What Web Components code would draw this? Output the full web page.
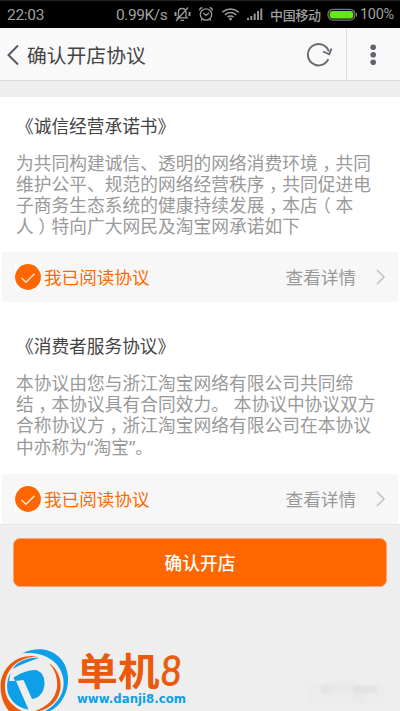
<!DOCTYPE html>
<html lang="zh-CN">
<head>
<meta charset="utf-8">
<title>确认开店协议</title>
<style>
html,body{margin:0;padding:0;background:#eee}
body{width:400px;height:711px;overflow:hidden;font-family:"Noto Sans","Noto Sans CJK SC",sans-serif}
</style>
</head>
<body>
<shop-page></shop-page>
<script>
function define(name, html){
  const t=document.createElement('template');
  t.innerHTML=html;
  customElements.define(name, class extends HTMLElement{
    constructor(){super();this.attachShadow({mode:'open'}).append(t.content.cloneNode(true));}
  });
}

define('status-bar', `<style>
:host{display:flex;height:28px;box-sizing:border-box;align-items:center;background:#000;border-top:1px solid #222;color:#a0a0a0;font:15.5px/28px Roboto,"Noto Sans CJK SC",sans-serif;white-space:nowrap}
span{display:block}svg{display:block;flex:none}
.t{width:109px;padding-left:7px;letter-spacing:-.3px}
.s{width:57px;letter-spacing:-.45px}
.c{width:57px;font:500 13px/28px "Noto Sans CJK SC",sans-serif;letter-spacing:-.3px}
.p{font-size:14.5px;letter-spacing:-.3px}
</style>
<span class="t">22:03</span><span class="s">0.99K/s</span>
<svg width="97" height="27" viewBox="173 1 97 27" fill="none" stroke="#999" stroke-width="1.3">
<path d="M178.500 17.500V12Q178.500 8.500 182 8.500T186 12V17.500M176.500 17.800H188M176 21L188 7.500M180.500 20.300H184"/><path d="M175.500 12V16M189.500 12V16" stroke-width="2"/>
<circle cx="206" cy="14.500" r="5.700"/><path d="M203.400 13L206 15.500L209 13M199.600 10.500Q199.600 8 202.400 7.700M209.600 7.700Q212.400 8 212.400 10.500M202.200 19L201 20.500M209.800 19L211 20.500"/>
<path d="M222.300 12.200Q230.500 5.800 238.700 12.200M224.800 14.800Q230.500 10.300 236.200 14.800M227.400 17.200Q230.500 14.900 233.600 17.200" stroke-width="1.600"/><circle cx="230.500" cy="19" r="1.400" fill="#999" stroke="none"/>
<path d="M248 20V17.700M251.300 20V16M254.700 20V13.500M258 20V11M261.300 20V8.500" stroke="#929292" stroke-width="2"/>
</svg>
<span class="c">中国移动</span>
<svg width="33" height="27" viewBox="327 1 33 27"><rect x="328" y="9.300" width="27" height="10.800" rx="5" fill="#111" stroke="#777" stroke-width="1.300"/><rect x="329.700" y="11" width="23.600" height="7.400" rx="3" fill="#66e619"/><path d="M356.500 13V16.500" stroke="#777"/></svg>
<span class="p">100%</span>`);

define('title-bar', `<style>
:host{display:flex;height:53px;box-sizing:border-box;background:#f9f9f9;border-bottom:1px solid #dcdcdc;align-items:stretch}
svg{display:block;flex:none}
h1{margin:0;flex:1;font:400 19.800px/54px "Noto Sans CJK SC",sans-serif;color:#444}
.m{width:53px;border-left:1px solid #ddd}
</style>
<svg width="27" height="52" viewBox="0 28 27 52"><path d="M18 45.500L8.500 55L18 64.500" fill="none" stroke="#555963" stroke-width="2"/></svg>
<h1><slot></slot></h1>
<svg width="40" height="52" viewBox="306 28 40 52"><path d="M328.300 59.200A10.700 10.700 0 1 1 328.800 51.500" fill="none" stroke="#666a73" stroke-width="1.900"/><path d="M323 51.500L329.300 54.300L331.500 48.500" fill="none" stroke="#666a73" stroke-width="1.900"/></svg>
<svg class="m" width="53" height="52" viewBox="347 28 53 52" fill="#5f636c"><circle cx="373.200" cy="47.200" r="2.800"/><circle cx="373.200" cy="54.800" r="2.800"/><circle cx="373.200" cy="62.300" r="2.800"/></svg>`);

define('agree-row', `<style>
:host{display:flex;height:50px;margin:0 2px;box-sizing:border-box;padding:0 12px 0 13px;align-items:center;background:#f7f7f7;font:17.600px/50px "Noto Sans CJK SC",sans-serif}
svg{display:block;flex:none}.a{color:#ff6a00;flex:1;padding-left:3px}.d{color:#999;margin-right:20px}
</style>
<svg width="26" height="26" viewBox="0 0 26 26"><rect width="26" height="26" fill="#fdfdfd"/><circle cx="13" cy="13" r="12.900" fill="#ff6600"/><path d="M6.500 14L11 18.200L19.500 9.700" fill="none" stroke="#ffe6d3" stroke-width="1.500"/></svg>
<span class="a">我已阅读协议</span><span class="d">查看详情</span>
<svg width="10" height="16" viewBox="0 0 10 16"><path d="M1 1L8 8L1 15" fill="none" stroke="#c3c3c3" stroke-width="1.600"/></svg>`);

define('agreement-card', `<style>
:host{display:flex;flex-direction:column;background:#fff;height:var(--h)}
.b{flex:1;padding:var(--top) 0 0 16px}
h2{margin:0 0 15px;font:400 17.700px/26px "Noto Sans CJK SC",sans-serif;color:#444}
</style>
<div class="b"><h2><slot name="title"></slot></h2><slot></slot></div><agree-row></agree-row>`);

define('text-line', `<style>:host{display:block;font:17.700px/21.200px "Noto Sans","Noto Sans CJK SC",sans-serif;height:21.200px;letter-spacing:.06px;white-space:nowrap;color:#999}</style><slot></slot>`);
define('mid-mark', `<style>:host{display:inline-block;transform:translateX(var(--dx,4.500px))}</style><slot></slot>`);

define('confirm-button', `<style>
:host{display:block;margin:13px 13px 0}
button{display:block;width:100%;height:49px;border:1px solid #f5a876;border-radius:7px;background:#ff6600;color:#fff;font:500 17.700px/46px "Noto Sans CJK SC",sans-serif;padding:0 0 3px}
</style><button><slot></slot></button>`);

define('site-mark', `<style>:host{display:block;width:200px;height:66px}svg{display:block}</style>
<svg width="200" height="66" viewBox="0 645 200 66">
<path d="M22 653.500C36 647 49 648 59 657C70 667 71 687 62 700Q58 707 50 711H45C58 704 65 692 63.500 680C61 661 43 651 22 653.500Z" fill="#0d9fe8"/>
<path d="M38 656.500C18 653 3 666 .7 683C0 695 3 704 9 711H22C10 705 4.500 697 5 685C6 668 19 657 38 656.500Z" fill="#eb5a0b"/>
<path d="M48.500 663C57 668 61.500 678 60.500 688C59 701 50 708 40 711H35C47 707 55 699 57 688C58 678 55 669 48.500 663Z" fill="#eb5a0b"/>
<path d="M12.500 669C18 661 28 657 39 658C30 661 22 664 12.500 669Z" fill="#0d9fe8"/>
<path d="M10.500 673L9 681L16 681L28.500 709.500C14 707 6 696 7.200 684Q8 677 10.500 673Z" fill="#0d9fe8"/>
<path d="M13.500 677.500Q25 670 35 670C42 671 45 677 44.500 685Q43 695 36 698L32 699L23.500 680L15 681Z" fill="#0d9fe8"/>
<g fill="#eb5a0b" font-family="Noto Sans CJK SC,sans-serif" font-weight="700"><text x="76.500" y="684.500" font-size="38" textLength="83" lengthAdjust="spacingAndGlyphs">单机</text></g>
<text transform="translate(160 685) skewX(-5)" font-family="Liberation Sans,sans-serif" font-size="42" font-weight="400" fill="#eb5a0b" stroke="#eb5a0b" stroke-width=".8" textLength="20" lengthAdjust="spacingAndGlyphs">8</text>
<text x="77" y="703.200" font-family="DejaVu Sans,sans-serif" font-size="11.500" font-weight="700" fill="#0d9fe8" textLength="109" lengthAdjust="spacingAndGlyphs">www.danji8.com</text>
</svg>`);

define('blurred-patch', `<style>:host{display:block;width:77px;height:30px}svg{display:block;filter:blur(1px)}</style>
<svg width="77" height="30"><path d="M0 2H24V0H48V4H77V24H0Z" fill="#ececec"/><path d="M14 4H22V12H14ZM46 4H70V12H46Z" fill="#e3e3e3"/><path d="M22 4H46V12H22Z" fill="#e9e9e9"/><path d="M46 13H56V19H46Z" fill="#e9e9e9"/></svg>`);

define('shop-page', `<style>
:host{display:flex;flex-direction:column;width:400px;height:711px;background:#eee;box-sizing:border-box}
.one{margin-top:16px;--h:205px;--top:14.500px}.two{--h:222px;--top:30px;border-bottom:1px solid #e6e6e6}
footer{margin-top:auto;display:flex;justify-content:space-between;align-items:flex-end;padding-right:16px}
.l{--dx:-4.500px}
</style>
<status-bar></status-bar>
<title-bar>确认开店协议</title-bar>
<agreement-card class="one"><span slot="title">《诚信经营承诺书》</span>
<text-line>为共同构建诚信、透明的网络消费环境<mid-mark>，</mid-mark>共同</text-line>
<text-line>维护公平、规范的网络经营秩序<mid-mark>，</mid-mark>共同促进电</text-line>
<text-line>子商务生态系统的健康持续发展<mid-mark>，</mid-mark>本店<mid-mark class="l">（</mid-mark>本</text-line>
<text-line>人<mid-mark>）</mid-mark>特向广大网民及淘宝网承诺如下</text-line>
</agreement-card>
<agreement-card class="two"><span slot="title">《消费者服务协议》</span>
<text-line>本协议由您与浙江淘宝网络有限公司共同缔</text-line>
<text-line>结<mid-mark>，</mid-mark>本协议具有合同效力。 本协议中协议双方</text-line>
<text-line>合称协议方<mid-mark>，</mid-mark>浙江淘宝网络有限公司在本协议</text-line>
<text-line>中亦称为“淘宝”。</text-line>
</agreement-card>
<confirm-button>确认开店</confirm-button>
<footer><site-mark></site-mark><blurred-patch></blurred-patch></footer>`);
</script>
</body>
</html>
